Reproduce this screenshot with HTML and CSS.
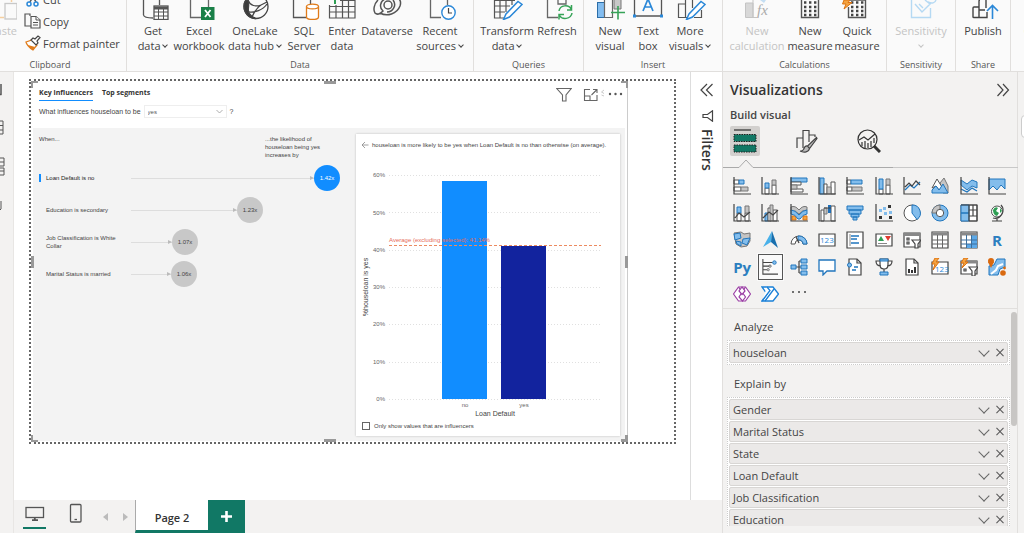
FILE: index.html
```html
<!DOCTYPE html>
<html lang="en">
<head>
<meta charset="utf-8">
<title>Report editor</title>
<link rel="stylesheet" href="styles.css">
</head>
<body>
<div class="app">
  <header class="ribbon">
    <section class="group clipboard">
      <div class="clip-body">
        <button class="paste" disabled>
          <svg class="paste-icon" width="20" height="21" viewBox="0 0 20 21" fill="none"><path d="M0 17.500H7M14.500 0V2" stroke="#f5cf9f" stroke-width="1.500"/><rect x="8" y="3.500" width="12" height="15.500" fill="#fafafa" stroke="#c8c8c8" stroke-width="1.300"/></svg>
          <span>Paste</span>
        </button>
        <div class="clip-list">
          <button class="row-btn"><svg width="18" height="16" viewBox="0 0 18 16" fill="none" stroke="#2b88d8" stroke-width="1.500"><path d="M6 0L12 11M12 0L6 11" stroke="#555"/><circle cx="5" cy="13" r="2"/><circle cx="12" cy="13" r="2"/></svg>Cut</button>
          <button class="row-btn"><svg width="18" height="16" viewBox="0 0 18 16" fill="#fafafa" stroke="#555" stroke-width="1.200"><path d="M7 13H1V1H6V3"/><path d="M7 3.500H12L16 7V15H7Z"/><path d="M12 3.500V7H16M9 9.500H14M9 12H14" stroke-width="1"/></svg>Copy</button>
          <button class="row-btn"><svg width="18" height="16" viewBox="0 0 18 16" fill="none"><path d="M2 7L8 5L13 10L9 15C6 13 3 11 2 7Z" fill="#fff" stroke="#e07b1a" stroke-width="1.300"/><path d="M4 10L11 12L9 15C7 14 5 12 4 10Z" fill="#e07b1a"/><path d="M7 5L9 3L11 4L14 1L16 2.500L13 6L14 8L12 10Z" fill="#fff" stroke="#444" stroke-width="1.200"/></svg>Format painter</button>
        </div>
      </div>
      <h2>Clipboard</h2>
    </section>

    <section class="group data">
      <div class="tools">
        <button><svg width="32" height="20" viewBox="0 0 32 20" fill="none" stroke="#555" stroke-width="1.300"><path d="M6.500 0V15Q7 18 16 18M22.500 0V5"/><rect x="17" y="6" width="14" height="13.500" fill="#fff"/><path d="M17 8H31" stroke-width="3"/><path d="M21.500 7V19M26.500 7V19M17 12H31M17 16H31" stroke-width="1"/></svg><span>Get<br>data <i class="caret"></i></span></button>
        <button><svg width="32" height="20" viewBox="0 0 32 20" fill="none"><path d="M7.500 0V17.500H18M25.500 0V7" stroke="#666" stroke-width="1.300"/><rect x="18" y="7" width="13.500" height="13" fill="#1a8048"/><path d="M22 10L27.500 17M27.500 10L22 17" stroke="#fff" stroke-width="1.800"/></svg><span>Excel<br>workbook</span></button>
        <button><svg width="32" height="20" viewBox="0 0 32 20" fill="none" stroke="#444" stroke-width="1.300"><circle cx="17" cy="6.500" r="12"/><path d="M9 0C11 6 8 9 10 13C12 16 15 18 17 18.500C9 19 5 12 5 6C5 3 6 0 9 0Z" fill="#3b3b3b"/><path d="M9 0C11 6 17 7 22 5L28 2M22 5C17 8 15 13 13 17M10 12C15 13 24 10 28 4"/></svg><span>OneLake<br>data hub <i class="caret"></i></span></button>
        <button><svg width="32" height="20" viewBox="0 0 32 20" fill="none"><path d="M5.500 0V17.500H18M22.500 0V4" stroke="#555" stroke-width="1.300"/><path d="M18.500 6.500V17C18.500 20.300 30.500 20.300 30.500 17V6.500" fill="#fff" stroke="#e07b1a" stroke-width="1.300"/><ellipse cx="24.500" cy="6.500" rx="6" ry="2.400" fill="#fff" stroke="#e07b1a" stroke-width="1.300"/></svg><span>SQL<br>Server</span></button>
        <button><svg width="32" height="20" viewBox="0 0 32 20" fill="none" stroke="#555" stroke-width="1.200"><path d="M3.500 5V18H29V0M10 5V18M16.500 0V18M22.500 0V18M3.500 6.500H29M3.500 12H29M14 .5H29"/><path d="M9 0V4" stroke="#2e9e53" stroke-width="2"/></svg><span>Enter<br>data</span></button>
        <button><svg width="32" height="20" viewBox="0 0 32 20" fill="none" stroke="#555" stroke-width="1.500"><circle cx="17" cy="5" r="4"/><path d="M7 0C3 4 2 10 4 13C6 15 9 14 12 11C8 8 9 1 14-1M9 13C16 17 26 14 29 6C30 3 29 0 28-1M22 0C26 5 22 12 16 12"/></svg><span>Dataverse</span></button>
        <button><svg width="32" height="20" viewBox="0 0 32 20" fill="none"><path d="M6.500 0V17.500H17M23.500 0V5" stroke="#666" stroke-width="1.300"/><circle cx="24.500" cy="12.500" r="6.700" fill="#fff" stroke="#2b88d8" stroke-width="1.400"/><path d="M24.500 8V13H28" stroke="#444" stroke-width="1.200"/></svg><span>Recent<br>sources <i class="caret"></i></span></button>
      </div>
      <h2>Data</h2>
    </section>

    <section class="group queries">
      <div class="tools">
        <button><svg width="32" height="20" viewBox="0 0 32 20" fill="none"><path d="M3.500 0V18H13M9 0V18M15 0V12M21 0V5M3.500 6H19M3.500 12H14M3.500 .5H24M23 10V13" stroke="#555" stroke-width="1.200"/><path d="M12.500 19.500L15 14L27 1.500L31 4.500L18.500 17Z" fill="#fff" stroke="#2b88d8" stroke-width="1.500"/></svg><span>Transform<br>data <i class="caret"></i></span></button>
        <button><svg width="32" height="20" viewBox="0 0 32 20" fill="none"><path d="M6.500 0V17.500H17M17 0V4H25V0" stroke="#666" stroke-width="1.300"/><path d="M18 11C19 4.500 28 4.500 30 9M30.500 5V10H26M31 13C30 19.500 21 20 18.500 15.500M18 19.500V14.500H23" stroke="#36a357" stroke-width="1.500"/></svg><span>Refresh</span></button>
      </div>
      <h2>Queries</h2>
    </section>

    <section class="group insert">
      <div class="tools">
        <button><svg width="32" height="20" viewBox="0 0 32 20" fill="none"><rect x="3.500" y="2.500" width="7" height="15" fill="#83bdf0" stroke="#2b6ea8"/><path d="M10.500 18V0M10.500 17.500H18.500V0" stroke="#666" stroke-width="1.200"/><path d="M20 0V9H27V0" fill="#c8c8c8" stroke="#777"/><path d="M17 12.500H31M24 6V19.500" stroke="#36a357" stroke-width="1.600"/></svg><span>New<br>visual</span></button>
        <button><svg width="32" height="20" viewBox="0 0 32 20" fill="none"><path d="M2.500 0V16H29.500V0" stroke="#555" stroke-width="1.300"/><path d="M11 11L16 -1L21 11M13 7H19" stroke="#2b88d8" stroke-width="1.700"/><path d="M1 14.500h3v3H1zM28 14.500h3v3h-3z" fill="#2b88d8"/></svg><span>Text<br>box</span></button>
        <button><svg width="32" height="20" viewBox="0 0 32 20" fill="none"><path d="M4.500 18V4H11M4.500 17.500H13M11.500 18V0M18.500 0V8M27.500 10V17.500H20" stroke="#555" stroke-width="1.200"/><path d="M12.500 19.500L15 14L27 1.500L31 4.500L18.500 17Z" fill="#fff" stroke="#2b88d8" stroke-width="1.500"/></svg><span>More<br>visuals <i class="caret"></i></span></button>
      </div>
      <h2>Insert</h2>
    </section>

    <section class="group calc">
      <div class="tools">
        <button disabled><svg width="32" height="20" viewBox="0 0 32 20" fill="none"><path d="M4.500 3V17.500H12V3Z" fill="#d8d8d8" stroke="#c4c4c4"/><path d="M12 0V17.500H16" stroke="#c4c4c4"/><path d="M19 0H25L23 3Z" fill="#c4def3"/><text x="16" y="15" class="fx">fx</text></svg><span>New<br>calculation</span></button>
        <button><svg width="32" height="20" viewBox="0 0 32 20" fill="none"><path d="M7.500 0V17.500H24.500V0" stroke="#555" stroke-width="1.400"/><path d="M10 2.500H23M10 7H23M10 11H23M10 15H23" stroke="#444" stroke-width="2.400" stroke-dasharray="2.400 2.600"/></svg><span>New<br>measure</span></button>
        <button><svg width="32" height="20" viewBox="0 0 32 20" fill="none"><path d="M7.500 7V17.500H24.500V0H9" stroke="#555" stroke-width="1.400"/><path d="M10 2.500H23M10 7H23M10 11H23M10 15H23" stroke="#444" stroke-width="2.400" stroke-dasharray="2.400 2.600"/><path d="M3 0L1.500 4H5L3 9L11 2.500H7L9 0Z" fill="#f4a340" stroke="#dc7312"/></svg><span>Quick<br>measure</span></button>
      </div>
      <h2>Calculations</h2>
    </section>

    <section class="group sens">
      <div class="tools">
        <button disabled><svg width="32" height="20" viewBox="0 0 32 20" fill="none" stroke="#b5d9f3" stroke-width="1.400"><path d="M6.500 0V17.500H25.500V8"/><path d="M10 4L17 12L25 4L20 0M14 4L18 8M31 0C30 3 27 4 23 2"/></svg><span>Sensitivity<br><i class="caret"></i></span></button>
      </div>
      <h2>Sensitivity</h2>
    </section>

    <section class="group share">
      <div class="tools">
        <button><svg width="32" height="20" viewBox="0 0 32 20" fill="none" stroke="#444" stroke-width="1.400"><path d="M6 17V8Q6 7 7 7H12V17Q12 17.500 11 17.500H7Q6 17.500 6 17ZM12 10V1Q12 0 13 0M19 0V8M12 10H18M12 17.500H20V12"/><path d="M25.500 19V6M20 11L25.500 5.500L31 11" stroke="#2b88d8" stroke-width="1.600"/></svg><span>Publish</span></button>
      </div>
      <h2>Share</h2>
    </section>
    <section class="group more"><div class="tools"><button><svg width="32" height="20" viewBox="0 0 32 20"><path d="M11 6V10" stroke="#36a357" stroke-width="2"/></svg><span>Copilot</span></button></div></section>
  </header>

  <div class="workspace">
    <nav class="rail" aria-label="Views">
      <svg width="6" height="140" viewBox="0 0 6 140" fill="none" stroke="#555"><path d="M0 10.500H1.500M1 0V11" stroke-width="1.500"/><path d="M0 37H3V50H0M0 41.500H3M0 46H3M0 74H4V82H0M0 84H4V91H0M0 78H4M0 87H4M1 117V125L0 126"/></svg>
    </nav>

    <div class="editor">
      <div class="stage">
        <main class="canvas">
          <div class="page">
            <article class="visual">
              <span class="handle tl"></span><span class="handle tr"></span><span class="handle bl"></span><span class="handle br"></span>
              <span class="handle tm"></span><span class="handle bm"></span><span class="handle lm"></span><span class="handle rm"></span>
              <div class="visual-head">
                <div>
                  <div class="vtabs"><button class="on">Key influencers</button><button>Top segments</button></div>
                  <div class="question"><label for="val">What influences houseloan to be</label><span class="pick"><select id="val"><option>yes</option></select><svg width="7" height="5" viewBox="0 0 7 5"><path d="M.5 1L3.500 4L6.500 1" fill="none" stroke="#999" stroke-width=".8"/></svg></span><span>?</span></div>
                </div>
                <div class="vtools">
                  <svg width="16" height="16" viewBox="0 0 16 16" fill="none" stroke="#666" stroke-width="1.100"><path d="M.8 1.500H15.200L10 8V14H6.500V8Z"/></svg>
                  <svg class="focus" width="22" height="16" viewBox="0 0 22 16" fill="none" stroke="#666" stroke-width="1.100"><path d="M7 2.500H1.500V13.500H14V8M10 2.500H14V6M14 2.500L8.500 8M1.500 9H7V13.500"/><path d="M21 3L18.500 5L21 6.500M18.500 8L21 9" stroke="#bbb" stroke-width=".8"/></svg>
                  <svg width="15" height="16" viewBox="0 0 15 16" fill="#555"><circle cx="2" cy="7" r="1.200"/><circle cx="7.500" cy="7" r="1.200"/><circle cx="13" cy="7" r="1.200"/></svg>
                </div>
              </div>
              <div class="analysis">
                <section class="influencers">
                  <div class="inf-head"><span>When...</span><span class="likely">...the likelihood of<br>houseloan being yes<br>increases by</span></div>
                  <ul>
                    <li class="sel"><span class="name">Loan Default is no</span><span class="line" style="width:183px"></span><b>1.42x</b></li>
                    <li><span class="name">Education is secondary</span><span class="line" style="width:106px"></span><b>1.23x</b></li>
                    <li><span class="name">Job Classification is White Collar</span><span class="line" style="width:41px"></span><b>1.07x</b></li>
                    <li><span class="name">Marital Status is married</span><span class="line" style="width:40px"></span><b>1.06x</b></li>
                  </ul>
                </section>
                <section class="card">
                  <h3><svg width="8" height="8" viewBox="0 0 8 8" fill="none" stroke="#888" stroke-width=".8"><path d="M7.500 4H1M4 1L1 4L4 7"/></svg>houseloan is more likely to be yes when Loan Default is no than otherwise (on average).</h3>
                  <svg class="chart" viewBox="0 0 264 264" role="img" aria-label="Share of houseloan yes by Loan Default">
                    <g stroke="#e0e0e0" stroke-dasharray="1 2"><path d="M33 20.500H245M33 57.500H245M33 95.500H245M33 132.500H245M33 169.500H245M33 207.500H245M33 244.500H245"/></g>
                    <g class="tick" text-anchor="end"><text x="29" y="22">60%</text><text x="29" y="60">50%</text><text x="29" y="97">40%</text><text x="29" y="134">30%</text><text x="29" y="171">20%</text><text x="29" y="209">10%</text><text x="29" y="246">0%</text></g>
                    <rect x="86" y="26" width="45" height="218" fill="#118dff"/>
                    <rect x="145" y="91" width="45" height="153" fill="#12239e"/>
                    <path d="M33 90.500H245" stroke="#ec8a60" stroke-width="1" stroke-dasharray="3 2"/>
                    <text class="avg" x="33" y="87">Average (excluding selected): 41.14%</text>
                    <g class="tick" text-anchor="middle"><text x="109" y="252">no</text><text x="168" y="252">yes</text></g>
                    <text class="axis" x="139" y="261" text-anchor="middle">Loan Default</text>
                    <text class="axis" x="12" y="132" text-anchor="middle" transform="rotate(-90 12 132)">%houseloan is yes</text>
                  </svg>
                  <label class="only"><input type="checkbox">Only show values that are influencers</label>
                </section>
              </div>
            </article>
          </div>
        </main>
        <aside class="filters">
          <button aria-label="Expand filters"><svg width="14" height="14" viewBox="0 0 14 14" fill="none" stroke="#444" stroke-width="1.200"><path d="M7 1L1 7L7 13M12.500 1L6.500 7L12.500 13"/></svg></button>
          <svg width="14" height="12" viewBox="0 0 14 12" fill="none" stroke="#444" stroke-width="1.200"><path d="M12.500 .8V11.200L7.500 7.500H3V4.500H7.500Z"/></svg>
          <h2>Filters</h2>
        </aside>
      </div>
      <footer class="pages">
        <button class="device on" aria-label="Desktop layout"><svg width="20" height="16" viewBox="0 0 20 16" fill="none" stroke="#555" stroke-width="1.300"><rect x="1" y="1.500" width="17.500" height="10"/><path d="M7 14.200H13M9.800 11V14" stroke-width="1.800"/></svg></button>
        <button class="device phone" aria-label="Mobile layout"><svg width="14" height="21" viewBox="0 0 14 21" fill="none" stroke="#555" stroke-width="1.300"><rect x="1.500" y="1.500" width="10.500" height="17.500" rx="1"/><path d="M5.500 16.500H8"/></svg></button>
        <button class="step" aria-label="Previous page"><svg width="5" height="8" viewBox="0 0 5 8" fill="#bbb"><path d="M5 0V8L0 4Z"/></svg></button>
        <button class="step" aria-label="Next page"><svg width="5" height="8" viewBox="0 0 5 8" fill="#bbb"><path d="M0 0V8L5 4Z"/></svg></button>
        <button class="page-tab">Page 2</button>
        <button class="add" aria-label="New page"><svg width="11" height="11" viewBox="0 0 11 11"><path d="M5.500 0V11M0 5.500H11" stroke="#fff" stroke-width="2.600"/></svg></button>
      </footer>
    </div>

    <aside class="viz">
      <div class="viz-head"><h2>Visualizations</h2><button aria-label="Collapse"><svg width="14" height="14" viewBox="0 0 14 14" fill="none" stroke="#444" stroke-width="1.200"><path d="M1.500 1L7 7L1.500 13M7 1L12.500 7L7 13"/></svg></button></div>
      <h3>Build visual</h3>
      <div class="modes">
        <button class="on" aria-label="Build visual"><svg width="24" height="26" viewBox="0 0 24 26"><path d="M1 2H18" stroke="#444" stroke-width="1.400"/><path d="M1 6.500H23V13.500H1ZM1 17H23V24H1Z" fill="#117865" stroke="#222" stroke-dasharray="1.500 1"/></svg></button>
        <button aria-label="Format visual"><svg width="24" height="24" viewBox="0 0 24 24" fill="none" stroke="#444" stroke-width="1.200"><path d="M2 19V9H8V19M8 9V1.500H14V13M14 6H20V8"/><path d="M21.500 8.500L12.500 17L14.500 19.500L22 9.500ZM12.500 17C10 16.500 9 19 8.500 20.500Q7 22.500 5 22C9 24 14 23 14.500 19.500" fill="#bbb"/></svg></button>
        <button aria-label="Analytics"><svg width="24" height="24" viewBox="0 0 24 24" fill="none" stroke="#333" stroke-width="1.200"><circle cx="10.500" cy="10.500" r="9.500"/><path d="M2 11L7 8L11 11L18 5M5 13V17M8 12V19M11 14V19M14 12V18M17 9V14"/><path d="M17 17L23 23" stroke-width="3"/></svg></button>
      </div>
      <svg class="notch" width="295" height="9" viewBox="0 0 295 9" fill="none"><path d="M0 8.500H16L23 1L30 8.500H170" stroke="#aaa"/><path d="M170 8.500H295" stroke="#c8c8c8"/></svg>

      <div class="gallery">
        <button aria-label="Stacked bar"><svg viewBox="0 0 18 18"><path class="w" d="M1 3h5v4H1zM1 10h7v4H1z"/><path class="b" d="M6 3h5v4H6z"/><path class="g" d="M8 10h7v4H8z"/><path class="k" d="M1 0V17H18"/></svg></button>
        <button aria-label="Stacked column"><svg viewBox="0 0 18 18"><path class="w" d="M4 11h4v6H4zM11 8h4v9h-4z"/><path class="b" d="M4 6h4v5H4z"/><path class="g" d="M11 3h4v5h-4z"/><path class="k" d="M1 0V17H18"/></svg></button>
        <button aria-label="Clustered bar"><svg viewBox="0 0 18 18"><path class="b" d="M1 1h16v4H1z"/><path class="w" d="M1 5h10v3H1zM1 12h12v3H1z"/><path class="g" d="M1 8h6v4H1z"/><path class="k" d="M1 0V17H18"/></svg></button>
        <button aria-label="Clustered column"><svg viewBox="0 0 18 18"><path class="b" d="M2 1h4v16H2z"/><path class="w" d="M6 7h3v10H6zM13 5h4v12h-4z"/><path class="g" d="M9 10h4v7H9z"/><path class="k" d="M1 0V17H18"/></svg></button>
        <button aria-label="Full stacked bar"><svg viewBox="0 0 18 18"><path class="w" d="M1 3h4v4H1zM1 10h5v4H1z"/><path class="b" d="M5 3h11v4H5z"/><path class="g" d="M6 10h10v4H6z"/><path class="k" d="M1 0V17H18"/></svg></button>
        <button aria-label="Full stacked column"><svg viewBox="0 0 18 18"><path class="w" d="M4 12h4v5H4zM11 8h4v9h-4z"/><path class="b" d="M4 2h4v10H4z"/><path class="g" d="M11 2h4v6h-4z"/><path class="k" d="M1 0V17H18"/></svg></button>
        <button aria-label="Line"><svg viewBox="0 0 18 18"><path class="l" d="M2 13L7 8L11 11L17 5"/><path class="k" d="M1 0V17H18M2 10L6 6L9 9L13 4L17 8"/></svg></button>
        <button aria-label="Area"><svg viewBox="0 0 18 18"><path class="g" d="M9 6L13 1L17 9V16H12Z"/><path class="w" d="M1 11L6 2L11 10L8 13L5 9Z"/><path class="b" d="M1 13L5 9L8 13L12 7L17 16H1Z"/></svg></button>
        <button aria-label="Stacked area"><svg viewBox="0 0 18 18"><path class="b" d="M1 3L7 7L12 3L17 5V11L12 9L7 13L1 8Z"/><path class="l" d="M1 12L7 15L12 11L17 14"/><path class="k" d="M1 0V17H18"/></svg></button>
        <button aria-label="Full stacked area"><svg viewBox="0 0 18 18"><path class="b" d="M1 2H17V12L13 8L9 13L5 9L1 13Z"/><path class="k" d="M1 0V17H18"/></svg></button>

        <button aria-label="Line and stacked column"><svg viewBox="0 0 18 18"><path class="w" d="M4 9h4v8H4zM12 9h4v8h-4z"/><path class="b" d="M4 3h4v6H4z"/><path class="g" d="M12 2h4v7h-4z"/><path class="k" d="M1 0V17H18M2 14L6 9L11 13L17 8"/></svg></button>
        <button aria-label="Line and clustered column"><svg viewBox="0 0 18 18"><path class="b" d="M4 9h3v8H4z"/><path class="w" d="M7 4h3v13H7zM12 6h4v11h-4z"/><path class="g" d="M9 1h3v16H9z"/><path class="k" d="M1 0V17H18M2 14L8 8L12 11L17 6"/></svg></button>
        <button aria-label="Ribbon"><svg viewBox="0 0 18 18"><path class="g" d="M1 3Q5 1 9 6Q13 1 17 3V6Q12 6 9 10Q6 6 1 7Z"/><path class="o" d="M2 12h4v4H2zM13 12h4v4h-4z"/><path class="b" d="M1 6Q5 6 9 11Q13 6 17 6V10Q13 10 10 15H8Q5 10 1 10Z"/><path class="k" d="M1 0V17H18"/></svg></button>
        <button aria-label="Waterfall"><svg viewBox="0 0 18 18"><path class="w" d="M3 6h3v11H3zM13 2h4v15h-4z"/><path class="g" d="M6 4h3v6H6z"/><path d="M10 1h3v8h-3z" fill="#1f6fb8"/><path class="k" d="M1 0V17H18M6 4H13"/></svg></button>
        <button aria-label="Funnel"><svg viewBox="0 0 18 18"><path class="b" d="M1 2h16v4H1zM3 6h12v4H3zM5 10h8v3H5zM7 13h4v3H7z"/></svg></button>
        <button aria-label="Scatter"><svg viewBox="0 0 18 18"><path class="k" d="M1 0V17H18"/><path d="M13 1h3v3h-3zM4 12h3v3H4zM14 12h3v3h-3z" fill="#333"/><path d="M4 5h3v3H4zM9 8h3v3H9zM14 7h3v3h-3zM8 3h3v3H8z" fill="#83bdec"/></svg></button>
        <button aria-label="Pie"><svg viewBox="0 0 18 18"><circle class="w" cx="9" cy="9" r="8"/><path class="b" d="M9 1A8 8 0 0 1 14 15.500L9 9Z"/></svg></button>
        <button aria-label="Donut"><svg viewBox="0 0 18 18"><circle class="b" cx="9" cy="9" r="8"/><path class="g" d="M9 1A8 8 0 0 0 1 9H5L9 5Z"/><circle class="w" cx="9" cy="9" r="3.700"/></svg></button>
        <button aria-label="Treemap"><svg viewBox="0 0 18 18"><path class="w" d="M1 1h16v16H1z"/><path class="b" d="M1 1h8v8H1zM1 9h8v8H1z"/><path class="k" d="M9 6H17M13 6V12M9 12H17M13 1V6M9 1V17M1 1H17V17H9"/></svg></button>
        <button aria-label="Map"><svg viewBox="0 0 18 18"><circle class="w" cx="9" cy="7.500" r="5.500"/><path d="M5 6Q7 2 10 4L8 7L11 9L9 12Q5 11 5 6ZM12 4l2 3-2 2z" fill="#2e9e53"/><path class="k" d="M13 1A8 8 0 0 1 5 14M9 15V17M4 17H14"/></svg></button>

        <button aria-label="Filled map"><svg viewBox="0 0 18 18"><path class="g" d="M1 2L8 1L11 3L17 2V10L14 15L8 16L3 13Z"/><path class="b" d="M1 3L7 2L8 7L2 9ZM10 8L17 7L14 14L9 12ZM3 10L8 11V15L4 13Z"/></svg></button>
        <button aria-label="Azure map"><svg viewBox="0 0 18 18"><path d="M11 0L2 16L10 11Z" fill="#48b1ea"/><path d="M11 0L10 11L17 17Z" fill="#186fae"/></svg></button>
        <button aria-label="Gauge"><svg viewBox="0 0 18 18"><path class="w" d="M1 13A8 8 0 0 1 17 13H13A4 4 0 0 0 5 13Z"/><path class="b" d="M8 5A8 8 0 0 1 17 13H13A4 4 0 0 0 8 9Z"/><path class="k" d="M6 6L9 12"/></svg></button>
        <button aria-label="Card"><svg viewBox="0 0 18 18"><path class="w k" d="M1 3h16v12H1z"/><text class="num" x="2" y="12">123</text></svg></button>
        <button aria-label="Multi-row card"><svg viewBox="0 0 18 18"><path class="w k" d="M1 1h16v16H1z"/><path class="l" d="M5 5H13M5 8H11M5 12H13"/><path d="M4 3V15" stroke="#888"/></svg></button>
        <button aria-label="KPI"><svg viewBox="0 0 18 18"><path class="w k" d="M1 3h16v12H1z"/><path d="M3 10L6 5L9 10Z" fill="#2e9e53"/><path d="M10 5H16L13 10Z" fill="#e03c31"/><path d="M3 12.500H12" stroke="#888"/></svg></button>
        <button aria-label="Slicer"><svg viewBox="0 0 18 18"><path class="w k" d="M1 2h16v14H1z"/><path d="M1 3.500H17" stroke="#888" stroke-width="3"/><path d="M4 7h2v2H4zM4 11h2v2H4z" class="k"/><path class="w k" d="M9 9H18L15 13V17H12V13Z"/></svg></button>
        <button aria-label="Table"><svg viewBox="0 0 18 18"><path class="w k" d="M1 1h16v16H1z"/><path d="M1 3H17" stroke="#888" stroke-width="3"/><path d="M6.500 4V17M11.500 4V17M1 9H17M1 13H17" stroke="#666"/></svg></button>
        <button aria-label="Matrix"><svg viewBox="0 0 18 18"><path class="w k" d="M1 1h16v16H1z"/><path d="M11 4h6v13h-6zM6 13h6v4H6z" fill="#5ca9e8"/><path d="M1 3H17" stroke="#888" stroke-width="3"/><path d="M6.500 4V17M11.500 4V17M1 9H17M1 13H17" stroke="#3c6f9c"/></svg></button>
        <button aria-label="R script" class="word">R</button>

        <button aria-label="Python" class="word">Py</button>
        <button aria-label="Key influencers" class="chosen"><svg viewBox="0 0 18 18"><path class="k" d="M1 0V17H18M1 4H12M1 8H8M1 12H6"/><circle class="b" cx="14" cy="4" r="2"/><circle class="w" cx="9" cy="8" r="1.300"/><circle class="g" cx="7" cy="12" r="1.300"/></svg></button>
        <button aria-label="Decomposition tree"><svg viewBox="0 0 18 18"><path class="k" d="M6 9H11M9 3V15M9 3H11M9 15H11"/><path class="b" d="M1 7h5v4H1zM11 1h6v4h-6zM11 7h6v4h-6zM11 13h6v4h-6z"/></svg></button>
        <button aria-label="Q&amp;A"><svg viewBox="0 0 18 18"><path class="w l" d="M1 2H17V13H9L5 17V13H1Z"/></svg></button>
        <button aria-label="Narrative"><svg viewBox="0 0 18 18"><path class="w k" d="M3 1H11L15 5V17H3Z"/><path class="k" d="M11 1V5H15"/><path class="l" d="M8 9H12M6 12H10"/><circle class="b" cx="3.500" cy="7" r="2"/></svg></button>
        <button aria-label="Metrics"><svg viewBox="0 0 18 18"><path class="w k" d="M5 1H13V7Q13 11 9 11Q5 11 5 7ZM5 3H1Q1 8 6 8M13 3H17Q17 8 12 8M9 11V14"/><path class="b" d="M5 14h8v3H5zM5 1h8v2H5z"/></svg></button>
        <button aria-label="Paginated report"><svg viewBox="0 0 18 18"><path class="w k" d="M3 1H11L15 5V17H3Z"/><path d="M6 15V11M9 15V12M12 15V9" stroke="#333" stroke-width="2"/><path class="k" d="M11 1V5H15"/></svg></button>
        <button aria-label="New card"><svg viewBox="0 0 18 18"><path class="w k" d="M1 4h16v12H1z"/><text class="num" x="4" y="14">123</text><path class="o" d="M4 0L1 6H4L2 12L8 4H5L8 0Z"/></svg></button>
        <button aria-label="New slicer"><svg viewBox="0 0 18 18"><path class="w k" d="M1 3h16v13H1z"/><path d="M1 4H17" stroke="#888" stroke-width="3"/><path class="k" d="M4 11h2v2H4z"/><path class="w k" d="M9 9H18L15 13V18H12V13Z"/><path class="o" d="M4 0L1 5H4L2 10L8 4H5L8 0Z"/></svg></button>
        <button aria-label="ArcGIS map"><svg viewBox="0 0 18 18"><path class="b" d="M1 8L6 7L9 1H17V9L12 11L10 17H1Z"/><path d="M3 16L8 12L10 8L15 6" stroke="#fff" stroke-width="2" fill="none"/><circle cx="3" cy="3" r="3" fill="#d9690f"/><path d="M0 4L3 10L6 4Z" fill="#d9690f"/><circle cx="15" cy="15" r="2.800" fill="#d9690f"/><circle cx="16.500" cy="10" r="1.400" fill="#d9690f"/></svg></button>

        <button aria-label="Power Apps"><svg viewBox="0 0 18 18" fill="#fff" stroke="#9b3fa5" stroke-width="1.200"><path d="M5.500 2H12.500L17.500 9L12.500 16H5.500L.5 9Z"/><path d="M5.500 2L12.500 12L9.500 16L6 12L12.500 2" fill="none"/><path d="M9 2L6 6L9 9.500L12 6Z"/></svg></button>
        <button aria-label="Power Automate"><svg viewBox="0 0 18 18" fill="#fff" stroke="#1a80d8" stroke-width="1.300"><path d="M1 2H12L17.500 9L12 16H1L6 9Z"/><path d="M6 2L9 5.500L1 16M13 4L4 16"/></svg></button>
        <button aria-label="More visuals"><svg viewBox="0 0 18 18" fill="#444"><circle cx="3" cy="7" r="1"/><circle cx="9" cy="7" r="1"/><circle cx="15" cy="7" r="1"/></svg></button>
      </div>

      <div class="wells">
        <h4>Analyze</h4>
        <ul class="well"><li><span>houseloan</span><button class="chev" aria-label="Options"></button><button class="x" aria-label="Remove"></button></li></ul>
        <h4>Explain by</h4>
        <ul class="well">
          <li><span>Gender</span><button class="chev" aria-label="Options"></button><button class="x" aria-label="Remove"></button></li>
          <li><span>Marital Status</span><button class="chev" aria-label="Options"></button><button class="x" aria-label="Remove"></button></li>
          <li><span>State</span><button class="chev" aria-label="Options"></button><button class="x" aria-label="Remove"></button></li>
          <li><span>Loan Default</span><button class="chev" aria-label="Options"></button><button class="x" aria-label="Remove"></button></li>
          <li><span>Job Classification</span><button class="chev" aria-label="Options"></button><button class="x" aria-label="Remove"></button></li>
          <li><span>Education</span><button class="chev" aria-label="Options"></button><button class="x" aria-label="Remove"></button></li>
        </ul>
        <span class="thumb"></span>
      </div>
    </aside>
    <aside class="edge"><span></span></aside>
  </div>
</div>
</body>
</html>
```
FILE: styles.css
```css
* { box-sizing: border-box; }
body { margin: 0; font: 11px/15px "Open Sans", "Noto Sans", sans-serif; color: #444; }
button { border: 0; padding: 0; margin: 0; background: none; font: inherit; color: inherit; }
h2, h3, h4, ul { margin: 0; padding: 0; list-style: none; }
svg { display: block; flex: none; }

.app { display: flex; flex-direction: column; height: 100vh; overflow: hidden; background: #f3f2f1; }

/* Ribbon */
.ribbon { display: flex; flex: none; height: 72px; background: #fafafa; overflow: hidden; border-bottom: 1px solid #e1dfdd; }
.group { flex: none; display: flex; flex-direction: column; justify-content: space-between; border-right: 1px solid #e1dfdd; overflow: hidden; }
.group h2 { font-size: 9px; line-height: 12px; font-weight: 400; text-align: center; color: #555; }
.tools { display: grid; justify-content: start; padding-left: 6px; }
.tools button { display: flex; flex-direction: column; align-items: center; gap: 3px; white-space: nowrap; align-self: start; text-align: center; }
.tools button:disabled, .paste:disabled { color: #c4c4c4; }
.clipboard { width: 127px; }
.clipboard h2 { padding-right: 26px; }
.data { width: 347px; }
.data .tools { grid-template-columns: 40px 52px 60px 38px 38px 52px 54px; }
.queries { width: 110px; }
.queries .tools { grid-template-columns: 58px 42px; padding-left: 4px; }
.insert { width: 139px; }
.insert .tools { grid-template-columns: 38px 38px 46px; padding-left: 7px; }
.calc { width: 164px; }
.calc .tools { grid-template-columns: 60px 46px 48px; padding-left: 4px; }
.sens { width: 69px; }
.share { width: 55px; }
.sens .tools, .share .tools { display: block; padding: 0; }
.sens .tools button, .share .tools button { width: 100%; }
.more { flex: 1; border-right: 0; }
.more .tools { grid-template-columns: 50px; }
.caret { display: inline-block; width: 4px; height: 4px; margin: 0 1px 3px 0; border: solid currentColor; border-width: 0 1px 1px 0; transform: rotate(45deg); }
.fx { font: italic 15px "Liberation Serif", serif; fill: #aaa; }
.clip-body { display: flex; gap: 7px; }
.paste { width: 17px; display: flex; flex-direction: column; align-items: flex-end; gap: 2px; overflow: hidden; }
.clip-list { display: grid; grid-auto-rows: 22px; margin-top: -12px; }
.row-btn { display: flex; align-items: center; gap: 1px; white-space: nowrap; }

/* Workspace */
.workspace { display: flex; flex: 1; min-height: 0; }
.rail { width: 14px; padding-top: 12px; border-right: 1px solid #e8e6e4; }
.editor { flex: 1; min-width: 0; display: flex; flex-direction: column; }
.stage { flex: 1; display: flex; min-height: 0; background: #fff; }
.canvas { flex: 1; min-width: 0; padding: 7px 14px 56px 15px; }
.page { height: 100%; border: 2px dotted #666; padding: 1px 46px 1px 2px; }
.visual { position: relative; height: 100%; display: flex; flex-direction: column; border-right: 1px solid #ccc; padding-right: 2px; color: #444; font-family: "Liberation Sans", Arial, sans-serif; font-size: 6px; line-height: 8px; }
.visual-head { display: flex; justify-content: space-between; height: 46px; padding: 5px 2px 0 6px; }
.vtabs { display: flex; gap: 9px; font-family: "Open Sans", "Noto Sans", sans-serif; }
.vtabs button { font-size: 7px; font-weight: 700; line-height: 12px; padding-bottom: 1px; border-bottom: 1px solid transparent; color: #333; }
.vtabs .on { border-color: #118dff; }
.question { display: flex; align-items: center; gap: 3px; margin-top: 4px; font-size: 7px; }
.pick { display: flex; align-items: center; width: 83px; height: 13px; padding: 0 3px; border: 1px solid #eee; }
.pick select { flex: 1; appearance: none; border: 0; padding: 0; background: none; font: inherit; font-size: 6px; color: #555; }
.vtools { display: flex; gap: 11px; }
.focus { margin-right: -8px; }
.analysis { flex: 1; min-height: 0; display: flex; justify-content: space-between; align-items: flex-start; background: #f3f3f3; padding: 6px 5px 3px 6px; }
.inf-head { display: flex; padding-top: 1px; }
.inf-head span { width: 226px; }
.inf-head .likely { width: 80px; white-space: nowrap; }
.influencers ul { margin-top: 3px; }
.influencers li { display: flex; align-items: center; height: 32px; border-left: 2px solid transparent; }
.influencers .name { width: 90px; padding: 0 6px 0 5px; }
.influencers .sel .name { color: #222; box-shadow: -2px 0 #118dff; }
.line { position: relative; height: 1px; background: #ddd; }
.line::after { content: ""; position: absolute; right: 0; top: -2px; border: solid transparent; border-width: 2px 0 2px 4px; border-left-color: #bbb; }
.influencers b { width: 26px; height: 26px; border-radius: 50%; background: #c8c8c8; font-weight: 400; line-height: 26px; text-align: center; }
.influencers .sel b { background: #118dff; color: #fff; }
.card { width: 264px; background: #fff; box-shadow: 0 0 2px #bbb; display: flex; flex-direction: column; }
.card h3 { display: flex; align-items: center; gap: 3px; padding: 7px 5px 6px; font-size: 6px; font-weight: 400; white-space: nowrap; }
.chart { width: 100%; }
.tick { font-size: 6px; fill: #666; }
.avg { font-size: 6px; fill: #e66c5a; }
.axis { font-size: 7px; fill: #444; }
.only { display: flex; align-items: center; gap: 4px; padding: 3px 6px 6px; }
.only input { appearance: none; width: 8px; height: 8px; margin: 0; border: 1px solid #666; }
.handle { position: absolute; border: 0 solid #999; width: 7px; height: 7px; }
.tl { left: -2px; top: -1px; border-width: 2px 0 0 2px; }
.tr { right: -1px; top: -1px; border-width: 2px 2px 0 0; }
.bl { left: -2px; bottom: -1px; border-width: 0 0 2px 2px; }
.br { right: -1px; bottom: -1px; border-width: 0 3px 3px 0; }
.tm, .bm { left: 50%; width: 12px; height: 3px; background: #999; margin-left: -6px; }
.tm { top: -1px; }
.bm { bottom: -1px; }
.lm, .rm { top: 50%; width: 3px; height: 12px; background: #999; margin-top: -6px; }
.lm { left: -2px; }
.rm { right: -1px; }

.filters { width: 32px; border-left: 1px solid #ddd; display: flex; flex-direction: column; align-items: center; gap: 13px; padding-top: 11px; }
.filters h2 { writing-mode: vertical-rl; font-size: 14px; font-weight: 600; line-height: 16px; color: #333; margin-top: -6px; }

/* Page tabs */
.pages { display: flex; height: 33px; flex: none; align-items: stretch; padding-left: 9px; }
.pages button { display: flex; align-items: center; justify-content: center; }
.device { width: 23px; margin-bottom: 4px; border-bottom: 2px solid transparent; }
.device.on { border-color: #117865; }
.phone { margin: 0 8px 4px 18px; }
.step { width: 20px; }
.pages .page-tab { width: 73px; background: #fff; border-left: 1px solid #aaa; border-bottom: 3px solid #117865; font-weight: 600; color: #333; padding-top: 4px; }
.add { width: 37px; }
.pages .add { background: #117865; }

/* Visualizations */
.viz { width: 296px; border-left: 1px solid #e1dfdd; border-right: 1px solid #e1dfdd; display: flex; flex-direction: column; padding-bottom: 7px; }
.viz-head { display: flex; justify-content: space-between; align-items: center; padding: 8px 7px 0 7px; }
.viz-head h2 { font-size: 14px; line-height: 20px; font-weight: 600; color: #333; }
.viz h3 { font-size: 11px; line-height: 15px; font-weight: 600; padding: 7px 7px 0; }
.modes { display: flex; gap: 32px; padding: 4px 7px 0; }
.modes button { width: 30px; height: 30px; display: grid; place-items: center; border-radius: 2px; }
.modes .on { background: #d2d0ce; }
.notch { margin-top: 3px; }
.gallery { display: grid; grid-template-columns: repeat(10, 1fr); grid-auto-rows: 26px; row-gap: 1px; padding: 5px 6px 1px 5px; }
.gallery button { display: grid; place-items: center; }
.gallery svg { width: 18px; height: 18px; }
.gallery .chosen { outline: 1px solid #555; outline-offset: -2px; background: #fafafa; margin: -1px 1px; }
.gallery .chosen svg { width: 16px; height: 16px; }
.gallery .word { font-size: 15px; font-weight: 700; color: #2b7fc0; }
.w { fill: #fff; stroke: #555; }
.b { fill: #83bdec; stroke: #2176bd; }
.g { fill: #c4c4c4; stroke: #777; }
.o { fill: #f4a340; stroke: #dc7312; }
.k { fill: none; stroke: #444; stroke-width: 1.2px; }
.l { fill: none; stroke: #2176bd; stroke-width: 1.3px; }
.w.k, .w.l { fill: #fff; }
.num { font-size: 8px; fill: #2b88d8; }
.wells { position: relative; flex: 1; min-height: 0; overflow: hidden; border-top: 1px solid #e1dfdd; padding: 9px 7px 0 4px; }
.wells h4 { font-size: 11px; line-height: 18px; font-weight: 400; padding-left: 7px; }
.well { display: grid; gap: 1px; padding: 1px; margin: 4px 0 10px; background: #fff; border: 1px dotted #ccc; }
.well li { display: flex; align-items: center; height: 21px; padding: 0 2px 0 3px; gap: 5px; background: #ebe9e8; border: 1px solid #d8d6d4; border-radius: 2px; }
.well span { flex: 1; }
.chev { width: 12px; height: 12px; display: grid; place-items: center; }
.chev::before { content: ""; width: 7px; height: 7px; border: solid #666; border-width: 0 1px 1px 0; transform: translateY(-2px) rotate(45deg); }
.x { position: relative; width: 10px; height: 10px; }
.x::before, .x::after { content: ""; position: absolute; left: 0; top: 4px; width: 10px; height: 1px; background: #555; transform: rotate(45deg); }
.x::after { transform: rotate(-45deg); }
.thumb { position: absolute; right: 0; top: 3px; width: 6px; height: 114px; border-radius: 3px; background: #c8c6c4; }
.edge { width: 6px; padding: 43px 0 0 3px; overflow: hidden; }
.edge span { display: block; width: 20px; height: 23px; border: 1px solid #ccc; border-radius: 4px; background: #fff; }
```
